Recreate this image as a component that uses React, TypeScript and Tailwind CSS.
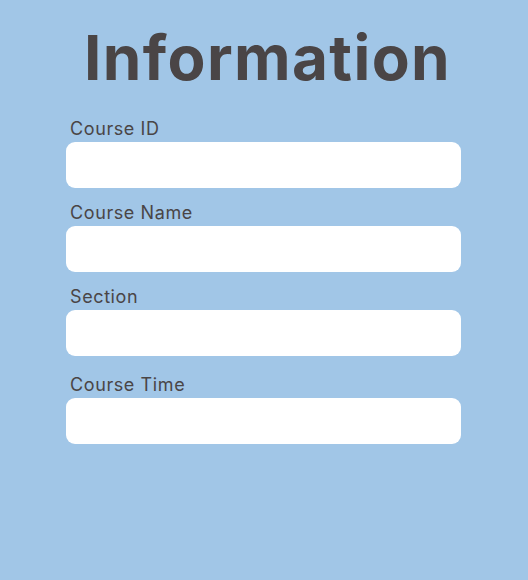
export default function App() {
  const fields = [
    { label: "Course ID", mt: "mt-0" },
    { label: "Course Name", mt: "mt-[13px]" },
    { label: "Section", mt: "mt-[13px]" },
    { label: "Course Time", mt: "mt-[17px]" },
  ];

  return (
    <div
      className="h-[580px] w-full bg-[#a1c6e7] text-[#4a4546]"
      style={{ fontFamily: "Inter, 'Open Sans', sans-serif" }}
    >
      <h1 className="pl-[7px] pt-[16px] text-center text-[62px] font-bold leading-[84px] tracking-[1.4px]">
        Information
      </h1>
      <form className="ml-[66px] mt-[17px] w-[395px]">
        {fields.map((f) => (
          <div key={f.label} className={f.mt}>
            <label className="block pl-[4px] text-[18px] leading-[24px] tracking-[0.6px]">{f.label}</label>
            <input
              type="text"
              className="mt-[1px] block h-[46px] w-full rounded-[9px] bg-white px-3 outline-none"
            />
          </div>
        ))}
      </form>
    </div>
  );
}
